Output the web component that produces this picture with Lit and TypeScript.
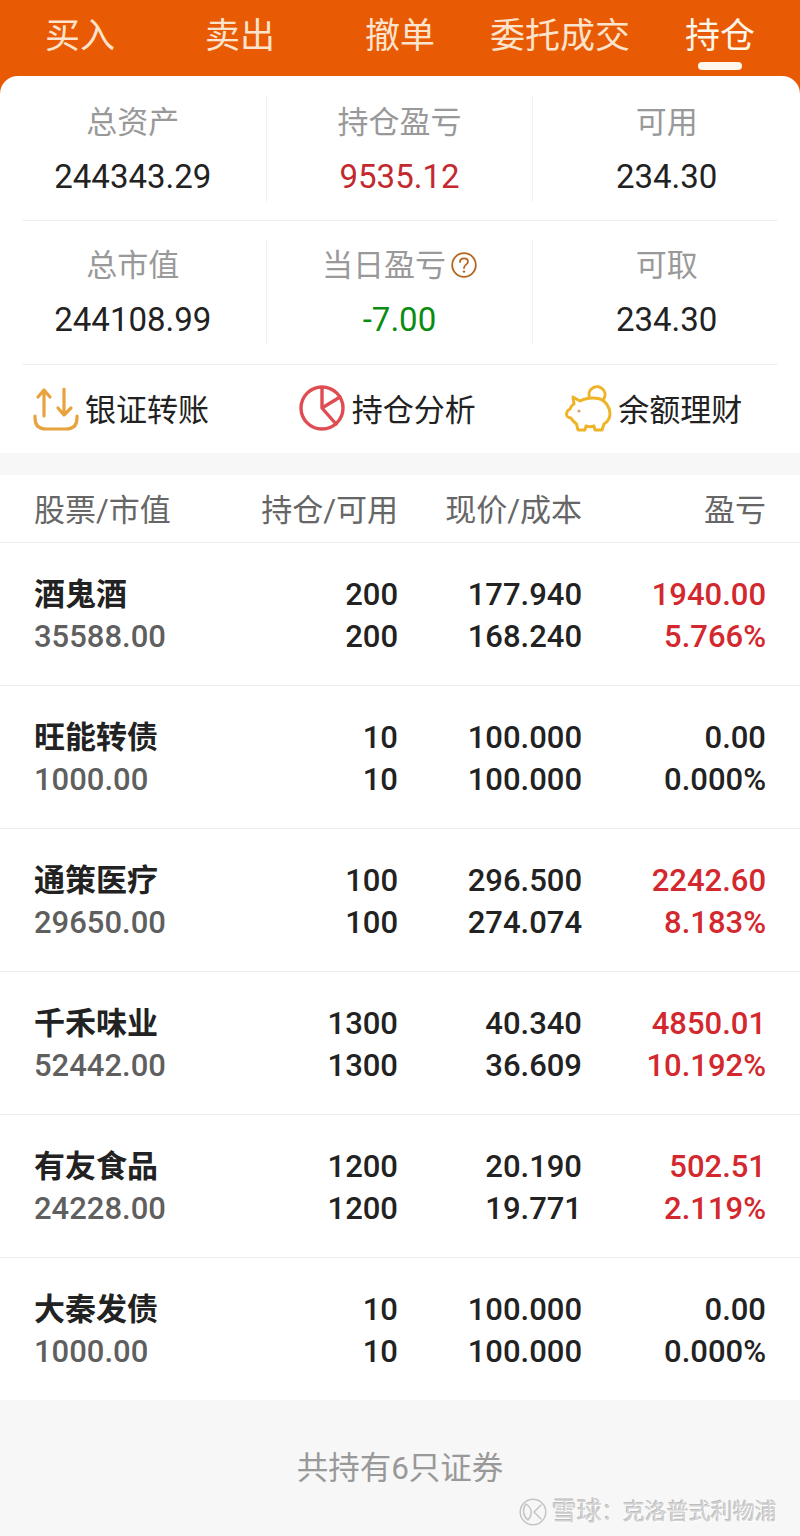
import { LitElement, html, css, svg } from "lit";
import { customElement } from "lit/decorators.js";

const TABS = ["买入", "卖出", "撤单", "委托成交", "持仓"];
const HOLDINGS = [
  ["酒鬼酒", "35588.00", "200", "200", "177.940", "168.240", "1940.00", "5.766%", true],
  ["旺能转债", "1000.00", "10", "10", "100.000", "100.000", "0.00", "0.000%", false],
  ["通策医疗", "29650.00", "100", "100", "296.500", "274.074", "2242.60", "8.183%", true],
  ["千禾味业", "52442.00", "1300", "1300", "40.340", "36.609", "4850.01", "10.192%", true],
  ["有友食品", "24228.00", "1200", "1200", "20.190", "19.771", "502.51", "2.119%", true],
  ["大秦发债", "1000.00", "10", "10", "100.000", "100.000", "0.00", "0.000%", false],
] as const;

const transferIcon = svg`<svg class="icon" viewBox="0 0 48 48" fill="none" stroke="#e8a33f" stroke-width="3.2" stroke-linecap="round" stroke-linejoin="round">
  <path d="M12 5V31M6 12L12 5L18 12"/>
  <path d="M32 4V30M26 23L32 30L39 23"/>
  <path d="M3 31V33Q3 44 14 44H34Q45 44 45 33V31"/>
</svg>`;
const pieIcon = svg`<svg class="icon" viewBox="0 0 48 48" fill="none" stroke="#df4d52" stroke-width="3.4" stroke-linecap="round" stroke-linejoin="round">
  <circle cx="23" cy="23" r="21"/>
  <path d="M23 3V23L41 12M23 23L37 39"/>
</svg>`;
const pigIcon = svg`<svg class="icon" viewBox="0 0 48 48" fill="none" stroke="#eeb426" stroke-width="3" stroke-linecap="round" stroke-linejoin="round">
  <path d="M8 12L15 16C20 13 28 12.5 33 13.5C41 15 45 23 45 29C45 34 42 37 39 39L37 45H30L29 41C26 42 24 42 21 41L20 45H13L11.5 39C9 37 7 35 6 33C3 33 1.5 31 1.5 29C1.5 26.5 3 25 5 24C6 21 7 20 9 19Z"/>
  <path d="M24.5 12.5A8 8 0 1 1 38 15"/>
  <circle cx="14" cy="26" r="1.6" fill="#d9a66a" stroke="none"/>
</svg>`;
const helpIcon = svg`<svg class="help" viewBox="0 0 26 26" fill="none" stroke="#b5651d" stroke-width="1.8" stroke-linecap="round">
  <circle cx="13" cy="13" r="11.8"/>
  <path d="M9 10C9 7.5 11 6.3 13 6.3C15.2 6.3 17 7.7 17 9.8C17 12.6 13 12.8 13 16"/>
  <circle cx="13" cy="19.6" r="1.2" fill="#b5651d" stroke="none"/>
</svg>`;
const snowIcon = svg`<svg class="wm-logo" viewBox="0 0 28 28" fill="none" stroke="#c4c4c4" stroke-width="1.5" stroke-linecap="round" stroke-linejoin="round">
  <circle cx="14" cy="14" r="12.8"/>
  <path d="M7 6C13 10 14 16 9 22C4 18 3 11 7 6Z"/>
  <path d="M22 7L15 14L22 21"/>
</svg>`;

@customElement("app-root")
export class AppRoot extends LitElement {
  static styles = css`
    :host {
      display: block;
      width: 800px;
      height: 1536px;
      overflow: hidden;
      background: #f7f7f7;
      font-family: "Roboto", "Noto Sans CJK SC", sans-serif;
      color: #222;
    }
    .top { background: #e85b04; }
    .tabs {
      display: grid;
      grid-template-columns: repeat(5, 160px);
      height: 76px;
    }
    .tab {
      position: relative;
      text-align: center;
      padding-top: 14px;
      box-sizing: border-box;
      font-size: 35px;
      line-height: 46px;
      color: #fbe3cd;
    }
    .tab.active { color: #fff6ea; }
    .tab.active::after {
      content: "";
      position: absolute;
      left: 58px;
      top: 62px;
      width: 44px;
      height: 8px;
      border-radius: 4px;
      background: #fff8ee;
    }
    .card {
      background: #fff;
      border-radius: 18px 18px 0 0;
      padding-top: 20px;
    }
    .stats {
      display: grid;
      grid-template-columns: repeat(3, 1fr);
    }
    .stat {
      height: 106px;
      padding-top: 5px;
      box-sizing: border-box;
      text-align: center;
      border-right: 1px solid #f1f1f1;
    }
    .stat:last-child { border-right: 0; }
    .stat .label {
      display: flex;
      justify-content: center;
      align-items: center;
      gap: 5px;
      height: 44px;
      font-size: 31px;
      line-height: 44px;
      color: #999;
    }
    .stat .value {
      margin-top: 10px;
      font-size: 33px;
      line-height: 44px;
      color: #222;
    }
    .stat .value.up { color: #c22a30; }
    .stat .value.down { color: #0a8c12; }
    .help { width: 26px; height: 26px; flex: none; margin-top: -2px; }
    .rule {
      height: 1px;
      margin: 18px 22px 18px;
      background: #efefef;
    }
    .rule.last { margin: 19px 22px 0; }
    .actions {
      display: grid;
      grid-template-columns: repeat(3, 1fr);
      height: 88px;
    }
    .action {
      display: flex;
      align-items: center;
      gap: 5px;
      padding-left: 32px;
      font-size: 31px;
      color: #222;
    }
    .action span { margin-bottom: 4px; }
    .icon { width: 48px; height: 48px; flex: none; overflow: visible; }
    .table {
      margin-top: 22px;
      background: #fff;
    }
    .row {
      display: grid;
      grid-template-columns: 180px 184px 184px 184px;
      padding: 0 34px;
      border-bottom: 1px solid #ececec;
    }
    .row:last-child { border-bottom: 0; }
    .head {
      height: 67px;
      align-items: center;
      font-size: 31px;
      color: #666;
    }
    .head div { margin-bottom: 2px; }
    .holding {
      box-sizing: border-box;
      height: 143px;
      padding-top: 4px;
      align-content: center;
      font-size: 31px;
      font-weight: 500;
      line-height: 42px;
      color: #222;
    }
    .holding:last-child { height: 142px; }
    .right { text-align: right; white-space: nowrap; }
    .name { font-weight: 700; white-space: nowrap; }
    .mv { color: #5f5f5f; }
    .pl.up { color: #d3282e; }
    .footer {
      position: relative;
      height: 136px;
      padding-top: 47px;
      box-sizing: border-box;
      text-align: center;
      font-size: 31.5px;
      line-height: 44px;
      color: #999;
    }
    .watermark {
      position: absolute;
      left: 519px;
      top: 97px;
      display: flex;
      align-items: center;
      height: 30px;
      font-size: 22px;
      line-height: 30px;
      white-space: nowrap;
      color: #d2d2d2;
      text-shadow: 1px 1px 0 #fff, -1px -1px 0 #bdbdbd;
    }
    .wm-logo { width: 28px; height: 28px; margin-right: 5px; flex: none; }
    .wm-brand { font-size: 25px; }
    .wm-colon { width: 21px; text-align: center; }
  `;

  private stat(label: unknown, value: string, tone = "") {
    return html`<div class="stat">
      <div class="label">${label}</div>
      <div class="value ${tone}">${value}</div>
    </div>`;
  }

  render() {
    return html`
      <div class="top">
        <div class="tabs">
          ${TABS.map((t, i) => html`<div class="tab ${i === 4 ? "active" : ""}">${t}</div>`)}
        </div>
        <div class="card">
          <div class="stats">
            ${this.stat("总资产", "244343.29")}
            ${this.stat("持仓盈亏", "9535.12", "up")}
            ${this.stat("可用", "234.30")}
          </div>
          <div class="rule"></div>
          <div class="stats">
            ${this.stat("总市值", "244108.99")}
            ${this.stat(html`当日盈亏${helpIcon}`, "-7.00", "down")}
            ${this.stat("可取", "234.30")}
          </div>
          <div class="rule last"></div>
          <div class="actions">
            <div class="action">${transferIcon}<span>银证转账</span></div>
            <div class="action">${pieIcon}<span>持仓分析</span></div>
            <div class="action">${pigIcon}<span>余额理财</span></div>
          </div>
        </div>
      </div>
      <div class="table">
        <div class="row head">
          <div>股票/市值</div>
          <div class="right">持仓/可用</div>
          <div class="right">现价/成本</div>
          <div class="right">盈亏</div>
        </div>
        ${HOLDINGS.map(
          ([name, mv, pos, avail, price, cost, pl, pct, up]) => html`<div class="row holding">
            <div class="name">${name}</div>
            <div class="right">${pos}</div>
            <div class="right">${price}</div>
            <div class="right pl ${up ? "up" : ""}">${pl}</div>
            <div class="mv">${mv}</div>
            <div class="right">${avail}</div>
            <div class="right">${cost}</div>
            <div class="right pl ${up ? "up" : ""}">${pct}</div>
          </div>`
        )}
      </div>
      <div class="footer">
        共持有6只证券
        <div class="watermark">
          ${snowIcon}<span class="wm-brand">雪球</span><span class="wm-colon">：</span><span>克洛普式利物浦</span>
        </div>
      </div>
    `;
  }
}
